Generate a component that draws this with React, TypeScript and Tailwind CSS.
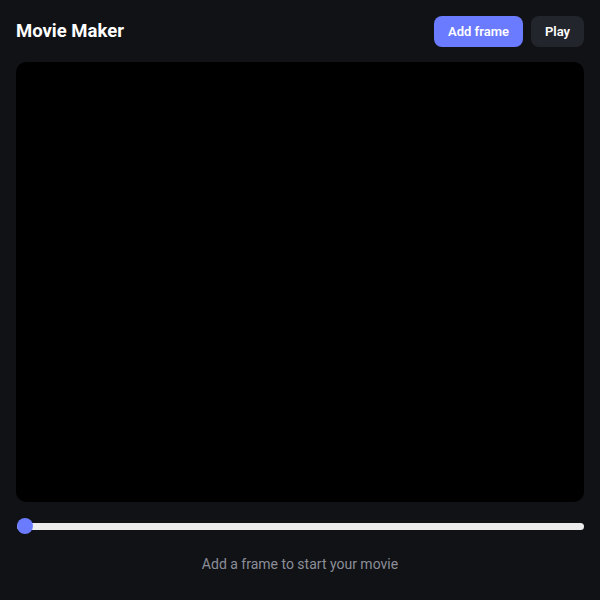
export default function App() {
    return (
        <div className="min-h-screen w-full bg-[#111216] p-4 font-['Roboto',sans-serif] text-white">
            {/* Header */}
            <div className="flex items-center justify-between">
                <h1 className="text-[18.5px] font-bold">Movie Maker</h1>
                <div className="flex items-center gap-2">
                    <button className="h-[31px] rounded-lg bg-[#6b7bff] px-[14px] text-[13px] font-semibold text-white">
                        Add frame
                    </button>
                    <button className="h-[31px] rounded-lg bg-[#23252c] px-[14px] text-[13px] font-semibold text-white">
                        Play
                    </button>
                </div>
            </div>

            {/* Canvas */}
            <div className="mt-[15px] h-[440px] w-full rounded-[10px] bg-black" />

            {/* Scrubber */}
            <div className="mt-4 flex h-4 items-center pl-px">
                <input
                    type="range"
                    min={0}
                    max={0}
                    defaultValue={0}
                    className="h-[7px] w-full cursor-pointer appearance-none rounded-full bg-[#ececec] [&::-webkit-slider-thumb]:h-4 [&::-webkit-slider-thumb]:w-4 [&::-webkit-slider-thumb]:appearance-none [&::-webkit-slider-thumb]:rounded-full [&::-webkit-slider-thumb]:bg-[#6b7bff]"
                />
            </div>

            {/* Status */}
            <p className="mt-5 text-center text-sm text-[#8b8e98]">
                Add a frame to start your movie
            </p>
        </div>
    );
}
